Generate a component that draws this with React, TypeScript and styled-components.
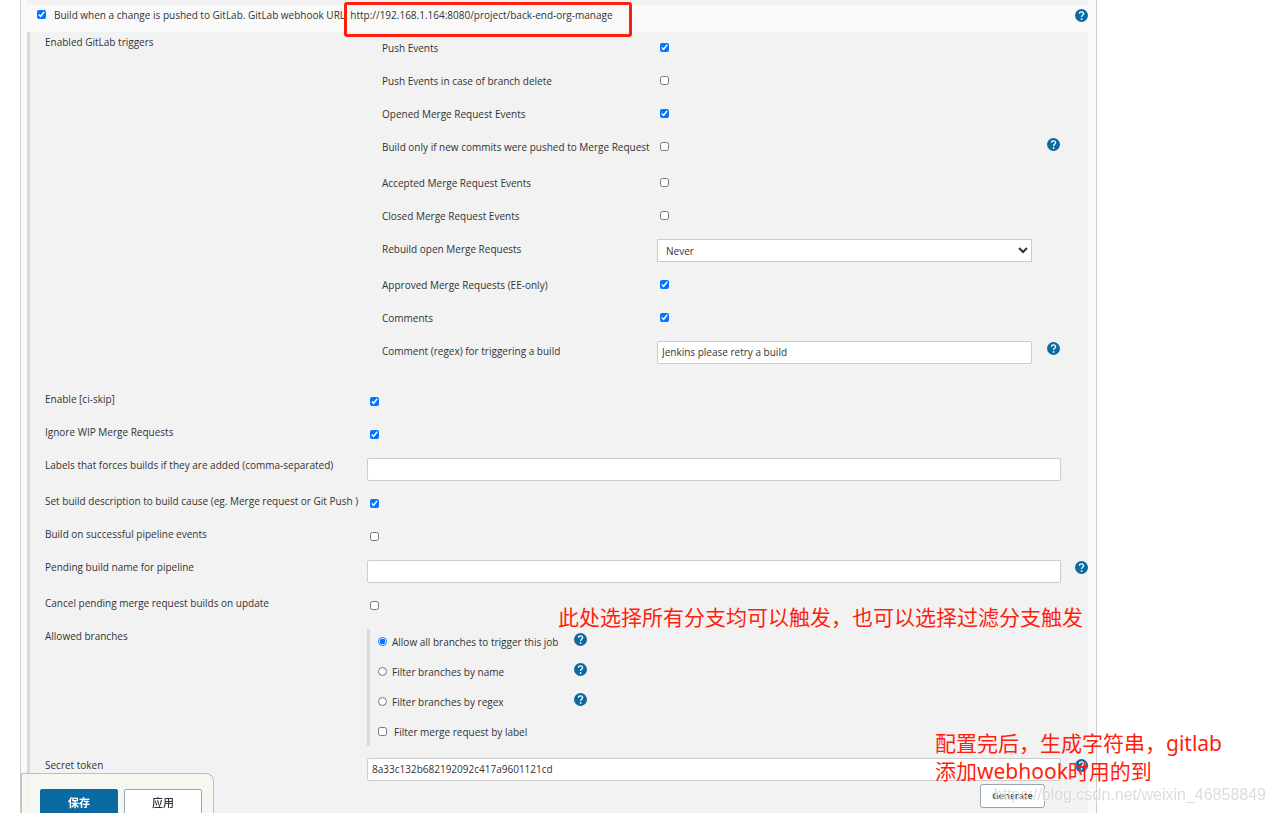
import React, { ReactNode } from 'react';
import styled, { createGlobalStyle } from 'styled-components';

const GlobalStyle = createGlobalStyle`
  *, *::before, *::after { box-sizing: border-box; }
  body {
    margin: 0;
    background: #fff;
    color: #333;
    font: 10px/18px "Open Sans", "Noto Sans CJK SC", sans-serif;
  }
  button, input, select { font: inherit; color: inherit; }
`;

const Panel = styled.main`
  display: flex;
  flex-direction: column;
  min-height: 100vh;
  margin: 0 178px 0 20px;
  padding: 0 8px 0 6px;
  border: solid #ccc;
  border-width: 0 1px;
  background: #f9f9f9;
`;

const PreviousSection = styled.div`
  height: 5px;
  background: #f2f2f2;
`;

const Header = styled.header`
  display: flex;
  align-items: flex-start;
  gap: 8px;
  height: 27px;
  padding: 1px 0 0 10px;
`;

const HeaderLabel = styled.label`
  flex: 1;
`;

const MarkedUrl = styled.span`
  position: relative;

  &::after {
    content: '';
    position: absolute;
    inset: -6px -19px -15px -6px;
    border: 3px solid #ff1f0f;
    border-radius: 3px;
    pointer-events: none;
  }
`;

const Form = styled.form`
  flex: 1;
  padding-left: 15px;
  border-left: 3px solid #d9d9d9;
  background: #f2f2f2;
`;

const Row = styled.div<{ $tall?: boolean }>`
  display: grid;
  grid-template-columns: 322px minmax(0, 1fr) 27px;
  align-items: start;
  min-height: ${p => (p.$tall ? 36 : 33)}px;
`;

const TriggerRow = styled(Row)`
  grid-template-columns: 275px minmax(0, 1fr) 28px;
`;

const RowLabel = styled.label`
  padding-top: 2px;
`;

const GroupLabel = styled.span<{ $top?: number }>`
  padding-top: ${p => p.$top ?? 2}px;
`;

const Control = styled.div<{ $top: number }>`
  position: relative;
  display: flex;
  flex-direction: column;
  align-items: flex-start;
  padding-top: ${p => p.$top}px;
`;

const HelpCell = styled.div<{ $top: number }>`
  display: flex;
  justify-content: flex-end;
  padding-top: ${p => p.$top}px;
`;

const Triggers = styled.div`
  padding: 5px 1px 12px 15px;
`;

const Tick = styled.input`
  flex: none;
  width: 9px;
  height: 9px;
  margin: 5px 0 0 3px;
`;

const HeaderTick = styled(Tick)`
  margin: 4px 0 0;
`;

const TextBox = styled.input`
  width: 100%;
  height: 23px;
  padding: 0 4px 1px;
  border: 1px solid #ccc;
  border-radius: 2px;
  background: #fff;
`;

const Select = styled.select`
  width: 100%;
  height: 23px;
  padding: 0 4px;
  border: 1px solid #ccc;
  border-radius: 0;
  background: #fff;
`;

const HelpButton = styled.button`
  flex: none;
  display: block;
  width: 13px;
  height: 13px;
  padding: 0;
  border: 0;
  background: none;
  cursor: pointer;

  svg { display: block; }
`;

const HeaderHelp = styled.div`
  padding-top: 3px;
`;

const Branches = styled.div`
  display: flex;
  flex-direction: column;
  gap: 12px;
  margin-bottom: 8px;
  padding: 4px 0 5px 8px;
  border-left: 3px solid #d9d9d9;
`;

const Choice = styled.div`
  display: grid;
  grid-template-columns: 9px 177px 13px;
  gap: 5px;
  height: 18px;
`;

const LabelFilter = styled.div`
  display: flex;
  gap: 7px;
  height: 18px;
`;

const ChoiceInput = styled(Tick)`
  margin: 4px 0 0;
`;

const GenerateButton = styled.button`
  align-self: flex-end;
  width: 65px;
  height: 24px;
  margin: 3px 16px 0 0;
  padding: 0;
  border: 1px solid #98a6b0;
  border-radius: 3px;
  background: #fff;
  font-size: 9px;
  font-weight: 600;
`;

const Note = styled.p<{ $left: number; $top: number }>`
  position: absolute;
  z-index: 1;
  left: ${p => p.$left}px;
  top: ${p => p.$top}px;
  margin: 0;
  color: #ff1f0f;
  font: 21px/28px "Noto Sans", "Noto Sans CJK SC", sans-serif;
  white-space: nowrap;
  pointer-events: none;
`;

const SaveBar = styled.div`
  position: fixed;
  left: 21px;
  bottom: 0;
  display: flex;
  align-items: flex-start;
  gap: 6px;
  height: 40px;
  padding: 15px 11px 0 18px;
  overflow: hidden;
  border: 1px solid #a9ccb9;
  border-bottom: 0;
  border-top-right-radius: 8px;
  background: rgba(245, 249, 240, 0.92);
`;

const BarButton = styled.button<{ $primary?: boolean }>`
  width: 78px;
  height: 28px;
  padding: 0;
  border: 1px solid ${p => (p.$primary ? '#0b6aa2' : '#98a6b0')};
  border-radius: 2px;
  background: ${p => (p.$primary ? '#0b6aa2' : '#fff')};
  color: ${p => (p.$primary ? '#fff' : '#333')};
  font-size: 11px;
  font-weight: ${p => (p.$primary ? 700 : 500)};
`;

const Watermark = styled.div`
  position: fixed;
  z-index: 2;
  right: 9px;
  bottom: 8px;
  color: rgba(205, 205, 205, 0.7);
  font: 16px/20px "Liberation Sans", sans-serif;
  text-shadow: 1px 1px 1px rgba(255, 255, 255, 0.8);
  pointer-events: none;
`;

const Help = ({ topic }: { topic: string }) => (
  <HelpButton type="button" aria-label={`Help: ${topic}`}>
    <svg width="13" height="13" viewBox="0 0 13 13" aria-hidden="true">
      <circle cx="6.5" cy="6.5" r="6.5" fill="#0b6aa2" />
      <path
        d="M4.5 4.8C4.5 3.4 5.3 2.8 6.5 2.8S8.6 3.5 8.6 4.7C8.6 6 6.6 6.2 6.6 7.9"
        fill="none"
        stroke="#fff"
        strokeWidth="1.3"
      />
      <circle cx="6.6" cy="9.9" r="0.9" fill="#fff" />
    </svg>
  </HelpButton>
);

type Field = {
  id: string;
  label: string;
  kind: 'check' | 'text' | 'select';
  checked?: boolean;
  value?: string;
  help?: boolean;
  tall?: boolean;
};

const triggers: Field[] = [
  { id: 'push', label: 'Push Events', kind: 'check', checked: true },
  { id: 'push-delete', label: 'Push Events in case of branch delete', kind: 'check' },
  { id: 'mr-opened', label: 'Opened Merge Request Events', kind: 'check', checked: true },
  { id: 'mr-new-commits', label: 'Build only if new commits were pushed to Merge Request', kind: 'check', help: true, tall: true },
  { id: 'mr-accepted', label: 'Accepted Merge Request Events', kind: 'check' },
  { id: 'mr-closed', label: 'Closed Merge Request Events', kind: 'check' },
  { id: 'mr-rebuild', label: 'Rebuild open Merge Requests', kind: 'select', value: 'Never', tall: true },
  { id: 'mr-approved', label: 'Approved Merge Requests (EE-only)', kind: 'check', checked: true },
  { id: 'comments', label: 'Comments', kind: 'check', checked: true },
  { id: 'comment-regex', label: 'Comment (regex) for triggering a build', kind: 'text', value: 'Jenkins please retry a build', help: true, tall: true },
];

const options: Field[] = [
  { id: 'ci-skip', label: 'Enable [ci-skip]', kind: 'check', checked: true },
  { id: 'ignore-wip', label: 'Ignore WIP Merge Requests', kind: 'check', checked: true },
  { id: 'force-labels', label: 'Labels that forces builds if they are added (comma-separated)', kind: 'text', tall: true },
  { id: 'description', label: 'Set build description to build cause (eg. Merge request or Git Push )', kind: 'check', checked: true },
  { id: 'pipeline-events', label: 'Build on successful pipeline events', kind: 'check' },
  { id: 'pending-name', label: 'Pending build name for pipeline', kind: 'text', help: true, tall: true },
];

const branchModes = ['Allow all branches to trigger this job', 'Filter branches by name', 'Filter branches by regex'];

const FieldInput = ({ field }: { field: Field }) => {
  if (field.kind === 'check') return <Tick type="checkbox" id={field.id} defaultChecked={field.checked} />;
  if (field.kind === 'text') return <TextBox type="text" id={field.id} defaultValue={field.value} />;
  return (
    <Select id={field.id}>
      <option>{field.value}</option>
    </Select>
  );
};

const FieldRow = ({ field, nested, children }: { field: Field; nested?: boolean; children?: ReactNode }) => {
  const Layout = nested ? TriggerRow : Row;
  const top = nested ? 1 : 4;
  return (
    <Layout $tall={field.tall}>
      <RowLabel htmlFor={field.id}>{field.label}</RowLabel>
      <Control $top={top}>
        <FieldInput field={field} />
        {children}
      </Control>
      {field.help && (
        <HelpCell $top={top + 1}>
          <Help topic={field.label} />
        </HelpCell>
      )}
    </Layout>
  );
};

export default function App() {
  return (
    <>
      <GlobalStyle />
      <Panel>
        <PreviousSection />
        <Header>
          <HeaderTick type="checkbox" id="gitlab-trigger" defaultChecked />
          <HeaderLabel htmlFor="gitlab-trigger">
            Build when a change is pushed to GitLab. GitLab webhook URL:{' '}
            <MarkedUrl>http://192.168.1.164:8080/project/back-end-org-manage</MarkedUrl>
          </HeaderLabel>
          <HeaderHelp>
            <Help topic="GitLab webhook" />
          </HeaderHelp>
        </Header>
        <Form id="job-config" onSubmit={e => e.preventDefault()}>
          <Row>
            <GroupLabel $top={1}>Enabled GitLab triggers</GroupLabel>
            <Triggers role="group" aria-label="Enabled GitLab triggers">
              {triggers.map(field => (
                <FieldRow key={field.id} field={field} nested />
              ))}
            </Triggers>
          </Row>
          {options.map(field => (
            <FieldRow key={field.id} field={field} />
          ))}
          <FieldRow field={{ id: 'cancel-pending', label: 'Cancel pending merge request builds on update', kind: 'check' }}>
            <Note $left={191} $top={11}>
              此处选择所有分支均可以触发，也可以选择过滤分支触发
            </Note>
          </FieldRow>
          <Row>
            <GroupLabel>Allowed branches</GroupLabel>
            <Control $top={4}>
              <Branches role="group" aria-label="Allowed branches">
                {branchModes.map((mode, i) => (
                  <Choice key={mode}>
                    <ChoiceInput type="radio" name="branches" id={`branches-${i}`} defaultChecked={i === 0} />
                    <label htmlFor={`branches-${i}`}>{mode}</label>
                    <Help topic={mode} />
                  </Choice>
                ))}
                <LabelFilter>
                  <ChoiceInput type="checkbox" id="filter-label" />
                  <label htmlFor="filter-label">Filter merge request by label</label>
                </LabelFilter>
              </Branches>
            </Control>
          </Row>
          <FieldRow field={{ id: 'secret-token', label: 'Secret token', kind: 'text', value: '8a33c132b682192092c417a9601121cd', help: true }}>
            <GenerateButton type="button">Generate</GenerateButton>
            <Note $left={568} $top={-25}>
              配置完后，生成字符串，gitlab
              <br />
              添加webhook时用的到
            </Note>
          </FieldRow>
        </Form>
      </Panel>
      <SaveBar>
        <BarButton type="submit" form="job-config" $primary>
          保存
        </BarButton>
        <BarButton type="button">应用</BarButton>
      </SaveBar>
      <Watermark>https://blog.csdn.net/weixin_46858849</Watermark>
    </>
  );
}
